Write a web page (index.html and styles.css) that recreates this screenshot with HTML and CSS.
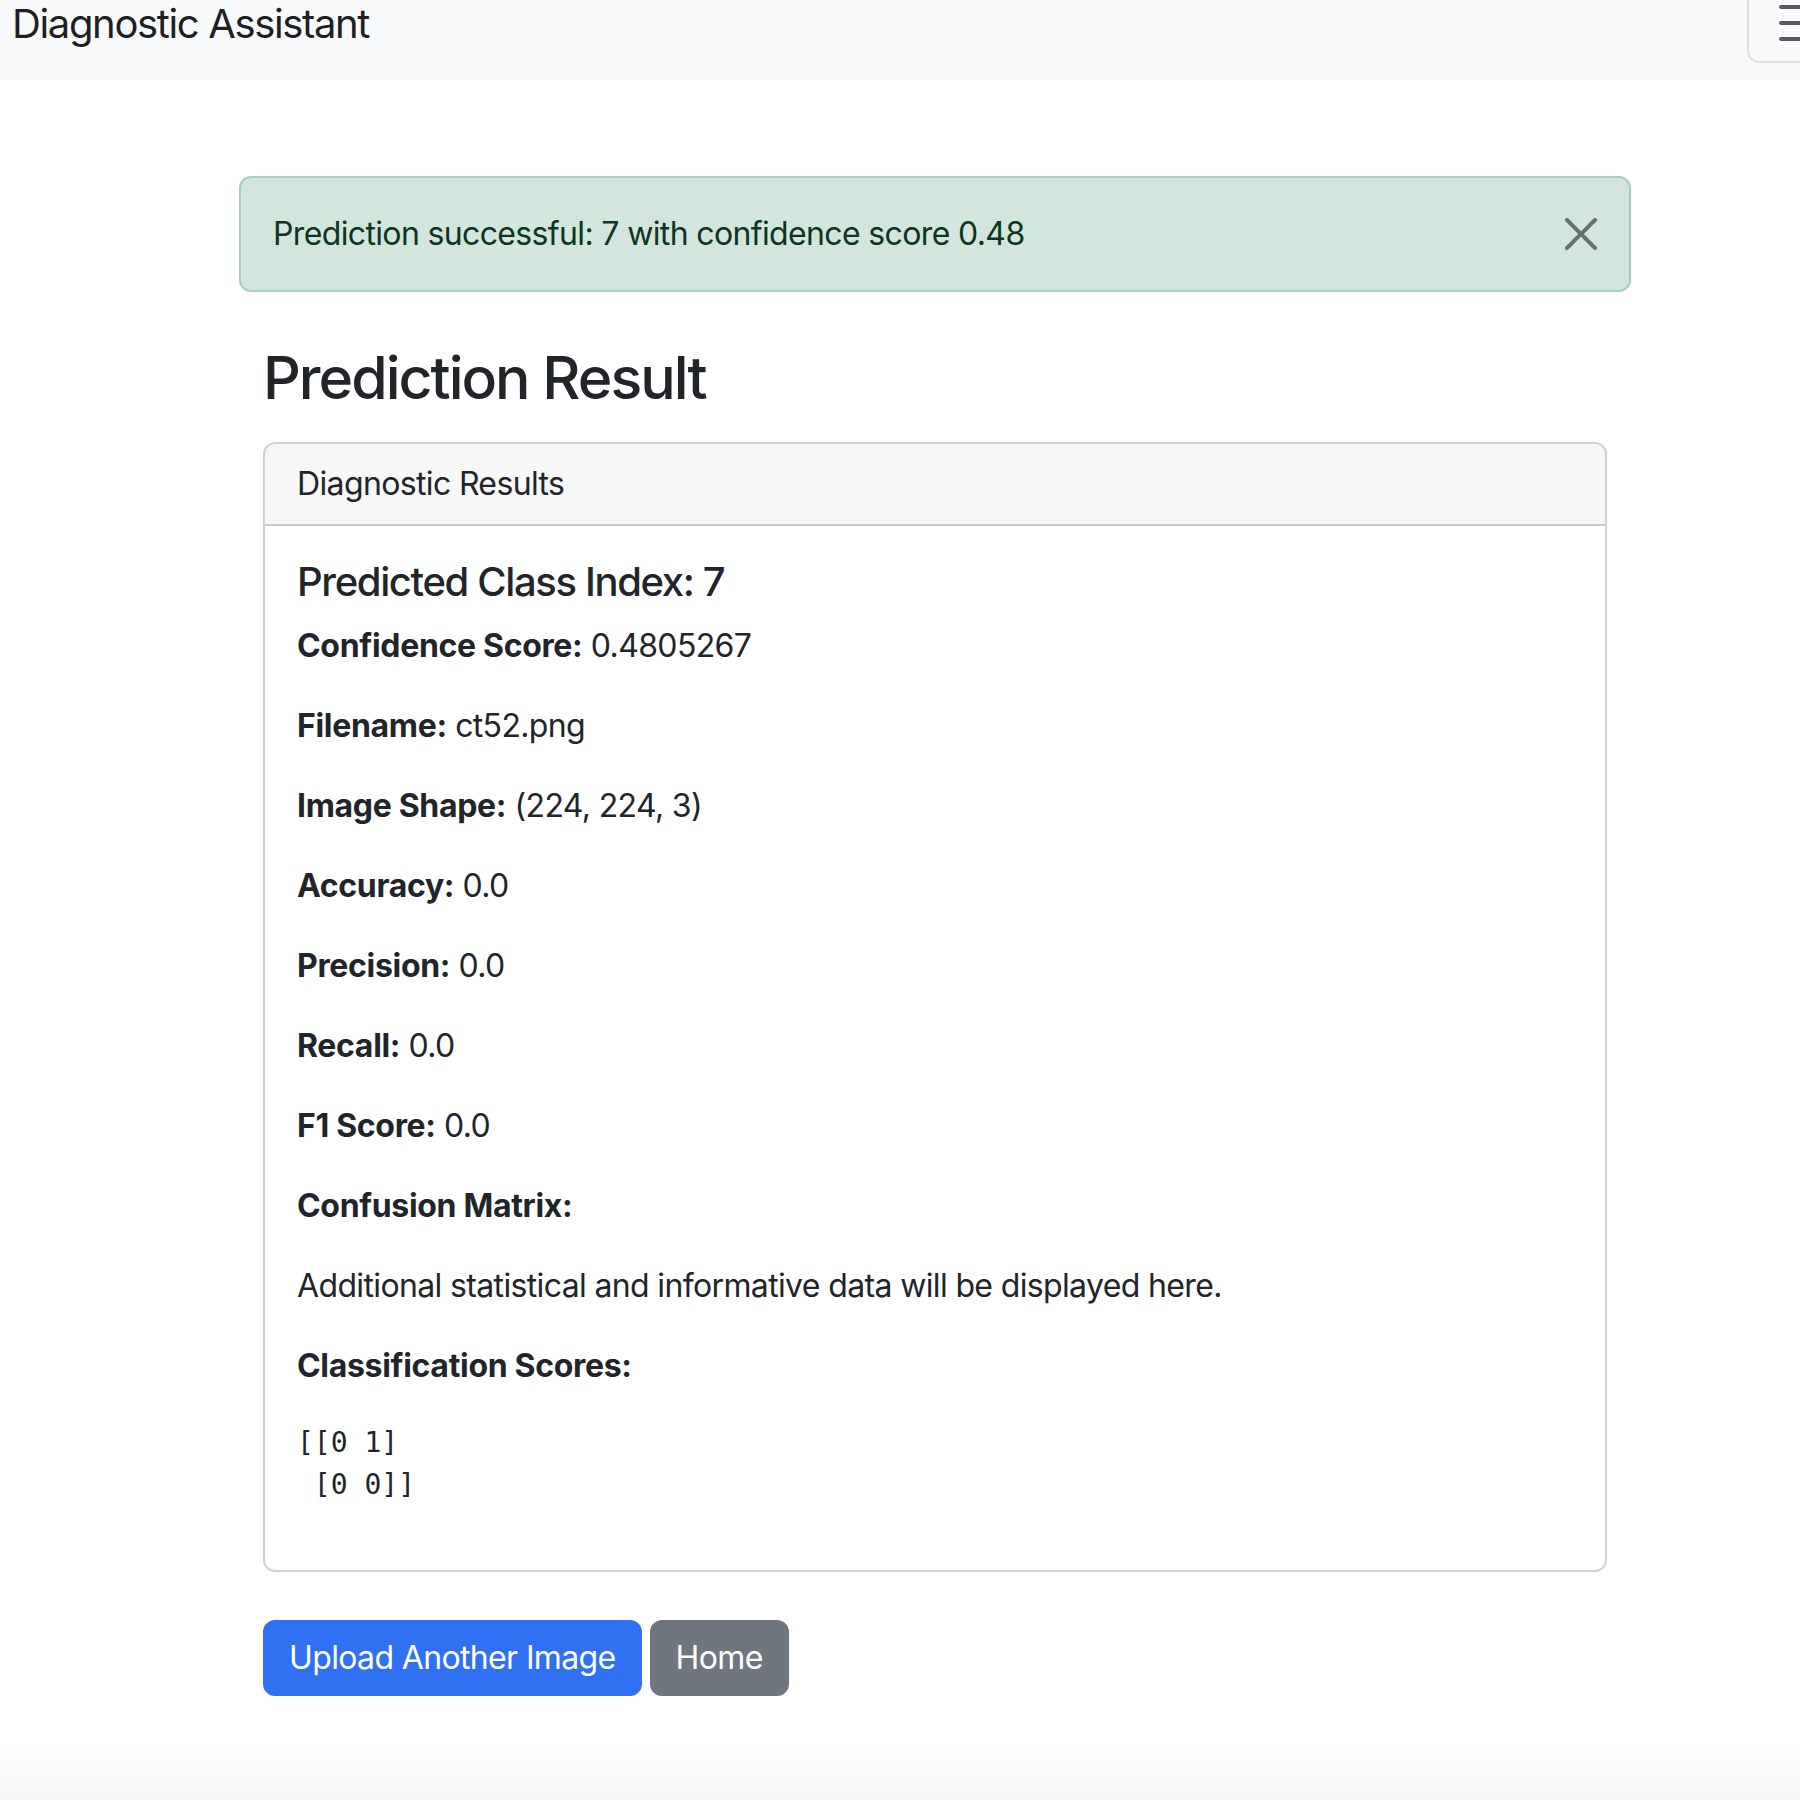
FILE: index.html
```html
<!DOCTYPE html>
<html lang="en">
<head>
<meta charset="utf-8">
<title>Prediction Result - Diagnostic Assistant</title>
<link rel="stylesheet" href="styles.css">
</head>
<body>
<div class="page">
  <nav class="navbar">
    <a class="brand" href="#">Diagnostic Assistant</a>
    <button class="toggler" type="button" aria-label="Toggle navigation">
      <svg class="toggler-icon" viewBox="0 0 30 30" width="60" height="60" aria-hidden="true">
        <path d="M4 7h22M4 15h22M4 23h22" stroke="rgba(33,37,41,0.75)" stroke-width="2" stroke-linecap="round" stroke-miterlimit="10" fill="none"/>
      </svg>
    </button>
  </nav>

  <div class="container main">
    <div class="alert" role="alert">
      <span>Prediction successful: 7 with confidence score 0.48</span>
      <button class="btn-close" type="button" aria-label="Close">
        <svg viewBox="0 0 16 16" width="32" height="32" aria-hidden="true">
          <path d="M.293.293a1 1 0 0 1 1.414 0L8 6.586 14.293.293a1 1 0 1 1 1.414 1.414L9.414 8l6.293 6.293a1 1 0 0 1-1.414 1.414L8 9.414l-6.293 6.293a1 1 0 0 1-1.414-1.414L6.586 8 .293 1.707a1 1 0 0 1 0-1.414z" fill="#000"/>
        </svg>
      </button>
    </div>

    <div class="container inner">
      <h2 class="title">Prediction Result</h2>
      <div class="card">
        <div class="card-header">Diagnostic Results</div>
        <div class="card-body">
          <h5 class="card-title">Predicted Class Index: 7</h5>
          <p><strong>Confidence Score:</strong> 0.4805267</p>
          <p><strong>Filename:</strong> ct52.png</p>
          <p><strong>Image Shape:</strong> (224, 224, 3)</p>
          <p><strong>Accuracy:</strong> 0.0</p>
          <p><strong>Precision:</strong> 0.0</p>
          <p><strong>Recall:</strong> 0.0</p>
          <p><strong>F1 Score:</strong> 0.0</p>
          <p><strong>Confusion Matrix:</strong></p>
          <p>Additional statistical and informative data will be displayed here.</p>
          <p><strong>Classification Scores:</strong></p>
          <pre>[[0 1]
 [0 0]]</pre>
        </div>
      </div>
      <div class="actions">
        <a class="btn btn-primary" href="#">Upload Another Image</a>
        <a class="btn btn-secondary" href="#">Home</a>
      </div>
    </div>
  </div>
  <div class="bottom-fade"></div>
</div>
</body>
</html>
```
FILE: styles.css
```css
html, body {
  margin: 0;
  padding: 0;
  background: #fff;
}
body {
  overflow: hidden;
  font-family: "Inter", "Liberation Sans", sans-serif;
  font-size: 32px;
  line-height: 1.5;
  letter-spacing: -0.02em;
  color: #212529;
}
.page {
  width: 1870px;
  min-height: 1800px;
}
.navbar {
  height: 80px;
  background: #f8f9fa;
  display: flex;
  align-items: flex-start;
  justify-content: space-between;
  overflow: hidden;
}
.brand {
  display: block;
  font-size: 40px;
  line-height: 48px;
  letter-spacing: -0.034em;
  color: rgba(0, 0, 0, 0.9);
  text-decoration: none;
  margin: 0 0 0 12px;
}
.toggler {
  box-sizing: border-box;
  width: 112px;
  height: 80px;
  margin-top: -17px;
  margin-right: 11px;
  padding: 8px 24px;
  border: 2px solid rgba(0, 0, 0, 0.1);
  border-radius: 12px;
  background: transparent;
  display: flex;
  align-items: center;
  justify-content: center;
}
.toggler-icon {
  display: block;
  flex: none;
}
.container {
  box-sizing: border-box;
  padding: 0 24px;
}
.main {
  width: 1440px;
  margin: 96px auto 0;
}
.alert {
  position: relative;
  box-sizing: border-box;
  padding: 32px 96px 32px 32px;
  border: 2px solid #a6cfbc;
  border-radius: 12px;
  background: #d3e6dd;
  color: #0a3622;
  margin-bottom: 32px;
}
.btn-close {
  position: absolute;
  top: 0;
  right: 0;
  padding: 40px 32px;
  border: 0;
  background: transparent;
  opacity: 0.5;
  line-height: 0;
}
.btn-close svg {
  display: block;
}
.inner {
  padding-top: 19px;
}
.title {
  font-size: 59px;
  font-weight: 500;
  line-height: 1.2;
  letter-spacing: -0.034em;
  margin: 0 0 16px;
}
.card {
  margin-top: 28px;
  border: 2px solid rgba(0, 0, 0, 0.175);
  border-radius: 12px;
  overflow: hidden;
}
.card-header {
  padding: 16px 32px;
  background: rgba(0, 0, 0, 0.03);
  border-bottom: 2px solid rgba(0, 0, 0, 0.175);
}
.card-body {
  padding: 32px;
}
.card-title {
  font-size: 40px;
  font-weight: 500;
  line-height: 1.2;
  letter-spacing: -0.034em;
  margin: 0 0 16px;
}
.card-body p {
  margin: 0 0 32px;
}
.card-body strong {
  font-weight: 700;
  letter-spacing: -0.01em;
}
.card-body pre {
  font-family: "DejaVu Sans Mono", "Liberation Mono", monospace;
  font-size: 28px;
  line-height: 42px;
  letter-spacing: 0;
  margin: 0 0 32px;
  color: #212529;
}
.actions {
  display: flex;
  gap: 8px;
  margin-top: 48px;
}
.btn {
  display: inline-block;
  padding: 12px 24px;
  border: 2px solid transparent;
  border-radius: 12px;
  font-size: 32px;
  line-height: 48px;
  color: #fff;
  text-decoration: none;
}
.btn-primary {
  background: #3070f2;
  border-color: #3070f2;
}
.btn-secondary {
  background: #70767e;
  border-color: #70767e;
}
.bottom-fade {
  position: fixed;
  left: 0;
  right: 0;
  bottom: 0;
  height: 60px;
  background: linear-gradient(to bottom, rgba(0, 0, 0, 0), rgba(0, 0, 0, 0.035));
  pointer-events: none;
}
```
